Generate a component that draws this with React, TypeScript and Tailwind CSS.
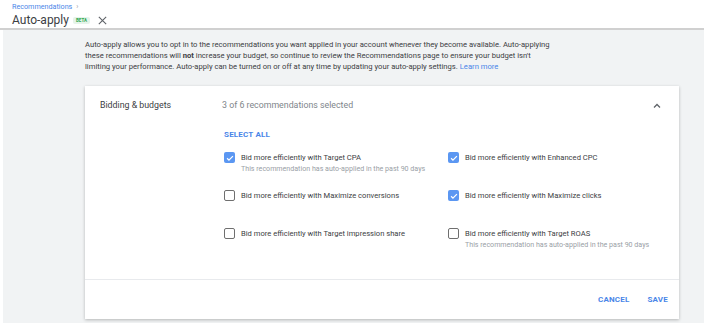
import React from 'react';

const rows = [
  [
    { label: 'Bid more efficiently with Target CPA', checked: true, note: true },
    { label: 'Bid more efficiently with Enhanced CPC', checked: true, note: false },
  ],
  [
    { label: 'Bid more efficiently with Maximize conversions', checked: false, note: false },
    { label: 'Bid more efficiently with Maximize clicks', checked: true, note: false },
  ],
  [
    { label: 'Bid more efficiently with Target impression share', checked: false, note: false },
    { label: 'Bid more efficiently with Target ROAS', checked: false, note: true },
  ],
];

const Checkbox: React.FC<{ checked: boolean }> = ({ checked }) =>
  checked ? (
    <span className="flex h-[11px] w-[11px] shrink-0 items-center justify-center rounded-[2px] bg-[#5b97f2]">
      <svg viewBox="0 0 24 24" className="h-[10px] w-[10px]" fill="none" stroke="white" strokeWidth="3">
        <path d="M5 12.5l4.5 4.5L19 7.5" />
      </svg>
    </span>
  ) : (
    <span className="h-[11px] w-[11px] shrink-0 rounded-[2px] border-[1.5px] border-[#6f6f6f] bg-white" />
  );

export default function App() {
  return (
    <div className="h-[323px] w-[704px] overflow-hidden bg-white font-['Roboto',sans-serif] text-[#3c4043]">
      {/* Header */}
      <div className="h-[30px] border-b-2 border-[#d0d0d0] pl-[12px] pt-[2px]">
        <div className="flex items-center gap-[4px] text-[7.2px] leading-[10px] text-[#4a86e8]">
          Recommendations <span className="text-[#9aa0a6]">›</span>
        </div>
        <div className="mt-[1px] flex items-center leading-[14px]">
          <span className="text-[12px] text-[#3c4043]">Auto-apply</span>
          <span className="ml-[4px] rounded-[2px] bg-[#e6f4ea] px-[3px] text-[4.5px] font-bold leading-[7px] text-[#34a853]">BETA</span>
          <svg viewBox="0 0 24 24" className="ml-[7px] h-[11px] w-[11px]" fill="none" stroke="#5f6368" strokeWidth="2.4">
            <path d="M4 4l16 16M20 4L4 20" />
          </svg>
        </div>
      </div>

      {/* Body */}
      <div className="ml-[3px] h-full bg-[#f1f3f4] pl-[82px] pt-[9px]">
        <p className="w-[470px] text-[7.65px] leading-[11px] text-[#3c4043]">
          Auto-apply allows you to opt in to the recommendations you want applied in your account whenever they become available. Auto-applying these recommendations will <b>not</b> increase your budget, so continue to review the Recommendations page to ensure your budget isn't limiting your performance. Auto-apply can be turned on or off at any time by updating your auto-apply settings.{' '}
          <span className="text-[#4a86e8]">Learn more</span>
        </p>

        <div className="mt-[14px] w-[594px] bg-white shadow-[0_1px_3px_rgba(0,0,0,0.25)]">
          <div className="flex items-center pl-[15px] pr-[16px] pt-[13px]">
            <span className="w-[122px] text-[8.8px] text-[#3c4043]">Bidding &amp; budgets</span>
            <span className="text-[8.8px] text-[#80868b]">3 of 6 recommendations selected</span>
            <svg viewBox="0 0 24 24" className="ml-auto h-[12px] w-[12px]" fill="none" stroke="#5f6368" strokeWidth="2.5">
              <path d="M6 15l6-6 6 6" />
            </svg>
          </div>

          <div className="pl-[139px] pt-[18px]">
            <div className="text-[8px] font-bold leading-[10px] tracking-[0.2px] text-[#4a86e8]">SELECT ALL</div>
            <div className="mt-[12px] flex flex-col gap-[16px]">
              {rows.map((row, i) => (
                <div key={i} className="grid grid-cols-[224px_224px]">
                  {row.map((item) => (
                    <div key={item.label} className="h-[22px]">
                      <div className="flex items-center gap-[6px]">
                        <Checkbox checked={item.checked} />
                        <span className="text-[7.6px] leading-[11px] text-[#3c4043]">{item.label}</span>
                      </div>
                      {item.note && (
                        <div className="pl-[17px] text-[7.1px] leading-[11px] text-[#9aa0a6]">
                          This recommendation has auto-applied in the past 90 days
                        </div>
                      )}
                    </div>
                  ))}
                </div>
              ))}
            </div>
          </div>

          <div className="mt-[29px] flex h-[40px] items-center justify-end gap-[18px] border-t border-[#e8eaed] pr-[11px]">
            <span className="text-[8px] font-bold tracking-[0.2px] text-[#4a86e8]">CANCEL</span>
            <span className="text-[8px] font-bold tracking-[0.2px] text-[#4a86e8]">SAVE</span>
          </div>
        </div>
      </div>
    </div>
  );
}
